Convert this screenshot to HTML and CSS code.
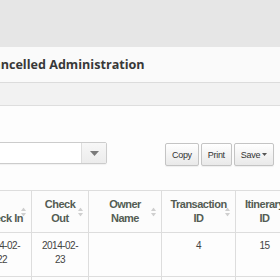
FILE: index.html
```html
<!DOCTYPE html>
<html>
<head>
<meta charset="utf-8">
<link rel="stylesheet" href="styles.css">
</head>
<body>
<div class="page">
  <div class="top"></div>
  <div class="panel">
    <div class="panel-title"><h1>Cancelled Administration</h1></div>
    <div class="strip"></div>
    <div class="content">
      <div class="toolbar">
        <div class="select">
          <span class="select-text"></span>
          <span class="select-arrow"><svg width="9" height="5" viewBox="0 0 9 5"><polygon points="0,0 9,0 4.5,5" fill="#7a7a7a"/></svg></span>
        </div>
        <div class="btn-group">
          <button class="btn">Copy</button>
          <button class="btn">Print</button>
          <button class="btn">Save <svg class="caret" width="5" height="3" viewBox="0 0 5 3"><polygon points="0,0 5,0 2.5,3" fill="#555"/></svg></button>
        </div>
      </div>
      <table class="grid">
        <colgroup>
          <col class="c1"><col class="c2"><col class="c3"><col class="c4"><col class="c5"><col class="c6">
        </colgroup>
        <thead>
          <tr>
            <th>Check In<svg class="sort" width="5" height="9" viewBox="0 0 5 9"><polygon points="0,3.5 2.5,0 5,3.5" fill="#cfcfcf"/><polygon points="0,5.5 5,5.5 2.5,9" fill="#cfcfcf"/></svg></th>
            <th>Check Out<svg class="sort" width="5" height="9" viewBox="0 0 5 9"><polygon points="0,3.5 2.5,0 5,3.5" fill="#cfcfcf"/><polygon points="0,5.5 5,5.5 2.5,9" fill="#cfcfcf"/></svg></th>
            <th>Owner Name<svg class="sort" width="5" height="9" viewBox="0 0 5 9"><polygon points="0,3.5 2.5,0 5,3.5" fill="#cfcfcf"/><polygon points="0,5.5 5,5.5 2.5,9" fill="#cfcfcf"/></svg></th>
            <th>Transaction ID<svg class="sort" width="5" height="9" viewBox="0 0 5 9"><polygon points="0,3.5 2.5,0 5,3.5" fill="#cfcfcf"/><polygon points="0,5.5 5,5.5 2.5,9" fill="#cfcfcf"/></svg></th>
            <th>Itinerary ID<svg class="sort" width="5" height="9" viewBox="0 0 5 9"><polygon points="0,3.5 2.5,0 5,3.5" fill="#cfcfcf"/><polygon points="0,5.5 5,5.5 2.5,9" fill="#cfcfcf"/></svg></th>
            <th>Status</th>
          </tr>
        </thead>
        <tbody>
          <tr>
            <td>2014-02-<br>22</td>
            <td>2014-02-<br>23</td>
            <td></td>
            <td>4</td>
            <td>15</td>
            <td></td>
          </tr>
          <tr>
            <td>2014-02-<br>24</td>
            <td>2014-02-<br>25</td>
            <td></td>
            <td>5</td>
            <td>16</td>
            <td></td>
          </tr>
        </tbody>
      </table>
    </div>
  </div>
</div>
</body>
</html>
```
FILE: styles.css
```css
html, body {
  margin: 0;
  padding: 0;
  overflow: hidden;
  background: #e7e7e7;
}

.page {
  margin-left: -28px;
  width: 420px;
}

.top {
  height: 47px;
  background: #e6e6e6;
}

.panel {
  background: #fdfdfd;
}

.panel-title {
  height: 35px;
  display: flex;
  align-items: center;
  background: #fafafa;
  border-bottom: 1px solid #dcdcdc;
}

.panel-title h1 {
  margin: 0;
  padding-left: 13px;
  font-family: "Open Sans", "Liberation Sans", sans-serif;
  font-weight: 700;
  font-size: 12.6px;
  color: #383838;
}

.strip {
  height: 22px;
  background: #f2f2f2;
  border-bottom: 1px solid #dedede;
}

.content {
  padding-top: 36px;
  background: #fdfdfd;
  font-family: "Liberation Sans", Arial, sans-serif;
}

.toolbar {
  display: flex;
  align-items: flex-start;
}

.select {
  width: 133px;
  height: 20px;
  display: flex;
  border: 1px solid #cccccc;
  border-radius: 2px;
  background: #ffffff;
  box-shadow: 0 1px 1px rgba(0,0,0,0.05);
}

.select-text {
  flex: 1;
}

.select-arrow {
  width: 24px;
  display: flex;
  align-items: center;
  justify-content: center;
  border-left: 1px solid #dddddd;
  background: linear-gradient(#f7f7f7, #ececec);
}

.btn-group {
  display: flex;
  gap: 2px;
  margin-left: 58px;
  margin-top: 1px;
}

.btn {
  height: 23px;
  padding: 0 6px;
  border: 1px solid #c4c4c4;
  border-radius: 2px;
  background: linear-gradient(#ffffff, #e9e9e9);
  font-family: "Liberation Sans", Arial, sans-serif;
  font-size: 9px;
  letter-spacing: -0.3px;
  color: #333333;
  display: flex;
  align-items: center;
  gap: 2px;
  box-shadow: 0 1px 1px rgba(0,0,0,0.06);
}

.caret {
  display: block;
}

.grid {
  margin-top: 24px;
  border-collapse: collapse;
  table-layout: fixed;
  width: 401px;
}

.c1 { width: 59px; }
.c2 { width: 57px; }
.c3 { width: 73px; }
.c4 { width: 74px; }
.c5 { width: 58px; }
.c6 { width: 80px; }

.grid th {
  position: relative;
  padding: 6px 7px 7px;
  border: 1px solid #dddddd;
  font-weight: 700;
  font-size: 11px;
  letter-spacing: -0.5px;
  line-height: 14px;
  color: #545c54;
  text-align: center;
  vertical-align: bottom;
  background: #fcfcfc;
}

.sort {
  position: absolute;
  right: 5px;
  top: 50%;
  transform: translateY(-50%);
}

.grid td {
  padding: 6px 7px 9px;
  border: 1px solid #dddddd;
  font-size: 10px;
  letter-spacing: -0.5px;
  line-height: 14px;
  color: #444444;
  text-align: center;
  vertical-align: top;
  background: #fdfdfd;
}
```
